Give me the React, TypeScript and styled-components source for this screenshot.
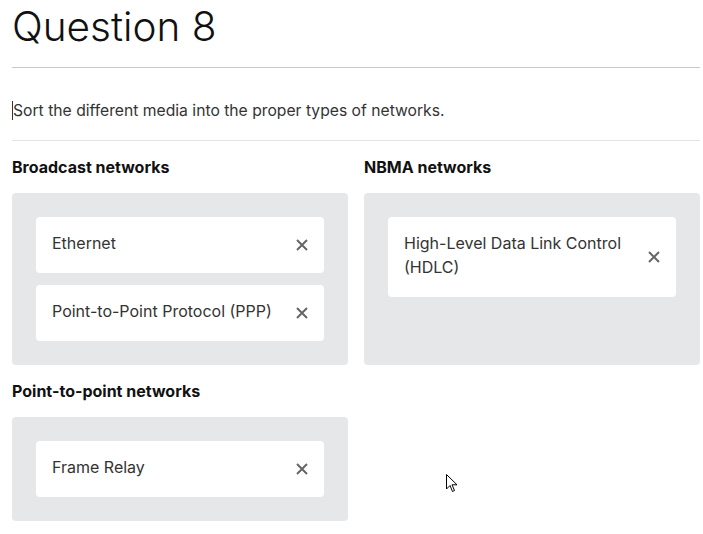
import styled, { createGlobalStyle } from "styled-components";

const GlobalStyle = createGlobalStyle`
  body {
    margin: 0;
    background: #fff;
    font-family: Inter, "Noto Sans", "Liberation Sans", sans-serif;
  }
`;

const Page = styled.main`
  padding: 0 3px 12px 12px;
  position: relative;
`;

const Title = styled.h1`
  margin: 0;
  padding-top: 3px;
  font-size: 40.5px;
  line-height: 48px;
  font-weight: 300;
  color: #111;
  padding-bottom: 16px;
  border-bottom: 1px solid #c8c8c8;
`;

const Prompt = styled.p`
  margin: 0;
  padding: 31px 0 17px;
  font-size: 15.7px;
  line-height: 24px;
  color: #333;
  border-bottom: 1px solid #e4e4e4;

  span {
    border-left: 1px solid #333;
  }
`;

const Grid = styled.div`
  display: grid;
  grid-template-columns: 1fr 1fr;
  column-gap: 16px;
  row-gap: 16px;
  padding-top: 16px;
`;

const Category = styled.section`
  display: flex;
  flex-direction: column;
  gap: 16px;
`;

const Heading = styled.h2`
  margin: 0;
  font-size: 16px;
  line-height: 20px;
  font-weight: 700;
  color: #111;
`;

const DropZone = styled.div`
  flex: 1;
  background: #e6e7e9;
  border-radius: 4px;
  padding: 24px;
  display: flex;
  flex-direction: column;
  gap: 12px;
`;

const Card = styled.div`
  background: #fff;
  border-radius: 4px;
  padding: 14px 16px 18px;
  display: flex;
  align-items: center;
  gap: 16px;
`;

const CardLabel = styled.span`
  flex: 1;
  font-size: 16px;
  line-height: 24px;
  color: #333;
`;

const RemoveButton = styled.button`
  background: none;
  border: none;
  padding: 0;
  margin-top: 4px;
  width: 12px;
  height: 12px;
  display: flex;
  align-items: center;
  justify-content: center;
  cursor: pointer;
`;

const Pointer = styled.svg`
  position: absolute;
  left: 446px;
  top: 474px;
`;

const CloseIcon = () => (
  <svg width="12" height="12" viewBox="0 0 12 12">
    <path d="M1 1 L11 11 M11 1 L1 11" stroke="#666" strokeWidth="2" />
  </svg>
);

type Group = { title: string; items: string[] };

const groups: Group[] = [
  { title: "Broadcast networks", items: ["Ethernet", "Point-to-Point Protocol (PPP)"] },
  { title: "NBMA networks", items: ["High-Level Data Link Control (HDLC)"] },
  { title: "Point-to-point networks", items: ["Frame Relay"] },
];

export default function App() {
  return (
    <>
      <GlobalStyle />
      <Page>
        <Title>Question 8</Title>
        <Prompt>
          <span />Sort the different media into the proper types of networks.
        </Prompt>
        <Grid>
          {groups.map((g) => (
            <Category key={g.title}>
              <Heading>{g.title}</Heading>
              <DropZone>
                {g.items.map((item) => (
                  <Card key={item}>
                    <CardLabel>{item}</CardLabel>
                    <RemoveButton aria-label={`Remove ${item}`}>
                      <CloseIcon />
                    </RemoveButton>
                  </Card>
                ))}
              </DropZone>
            </Category>
          ))}
        </Grid>
        <Pointer width="12" height="20" viewBox="0 0 12 20">
          <path d="M0.5 0.5 L0.5 15 L4 11.5 L6.5 17.5 L8.5 16.5 L6 10.8 L11 10.8 Z" fill="#fff" stroke="#000" strokeWidth="1" strokeLinejoin="round" />
        </Pointer>
      </Page>
    </>
  );
}
